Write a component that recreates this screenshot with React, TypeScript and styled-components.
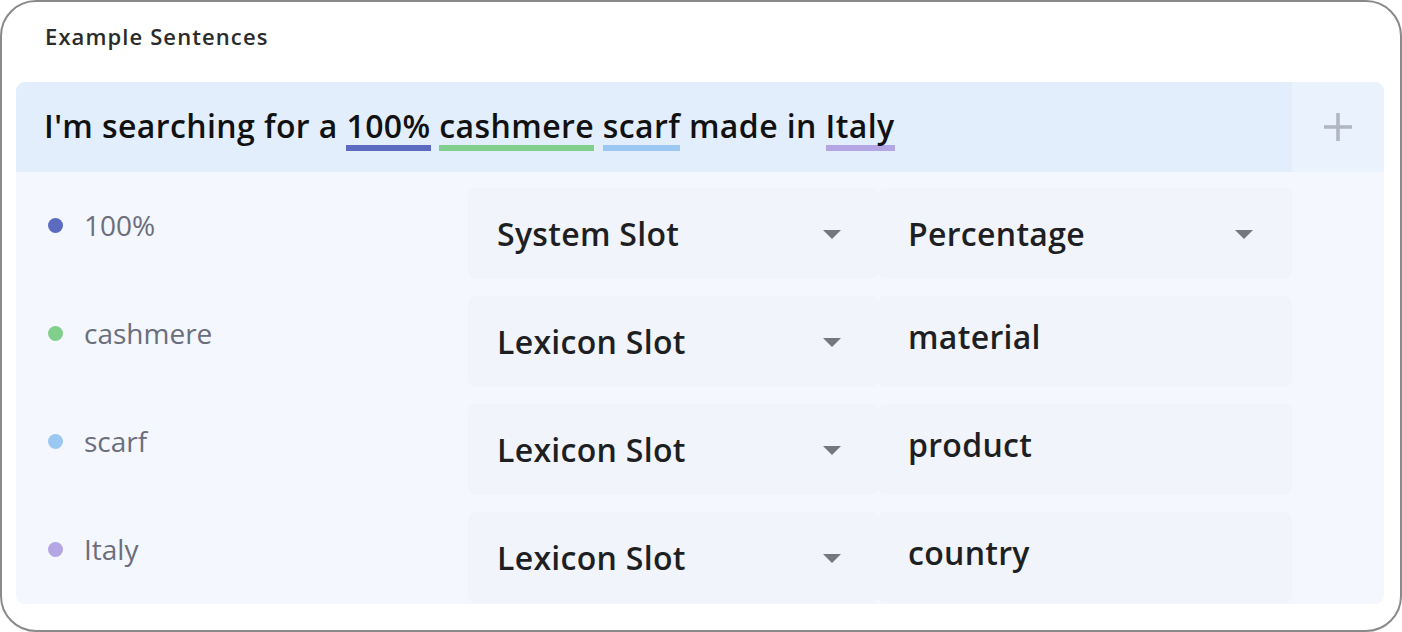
import React from 'react';
import styled, {createGlobalStyle} from "styled-components";

const GlobalStyle = createGlobalStyle`
  body {
    margin: 0;
    font-family: "Open Sans", "Noto Sans", sans-serif;
    background: #ffffff;
  }
`

type Slot = {
    word: string;
    color: string;
    kind: string;
    value: string;
    select?: boolean;
}

const slots: Slot[] = [
    {word: "100%", color: "#5c6bc0", kind: "System Slot", value: "Percentage", select: true},
    {word: "cashmere", color: "#81cf8d", kind: "Lexicon Slot", value: "material"},
    {word: "scarf", color: "#9ac8f3", kind: "Lexicon Slot", value: "product"},
    {word: "Italy", color: "#b3a6e3", kind: "Lexicon Slot", value: "country"},
];

const Arrow = () => (
    <svg width="20" height="10" viewBox="0 0 20 10">
        <path d="M1 1 L19 1 L10 10 Z" fill="#75777d"/>
    </svg>
);

const Plus = () => (
    <svg width="30" height="30" viewBox="0 0 30 30">
        <path d="M15 1 V29 M1 15 H29" stroke="#b0b7c1" strokeWidth="3.6"/>
    </svg>
);

const colorOf = (w: string) => slots.find(s => s.word === w)?.color;

export default function App() {
    const words = "I'm searching for a 100% cashmere scarf made in Italy".split(" ");
    return (
        <>
            <GlobalStyle/>
            <Card>
                <Title>Example Sentences</Title>
                <Panel>
                    <Header>
                        <Sentence>
                            <Line>
                                {words.map((w, i) => (
                                    <React.Fragment key={i}>
                                        {colorOf(w) ? <Mark $color={colorOf(w)!}>{w}</Mark> : w}
                                        {i < words.length - 1 ? " " : ""}
                                    </React.Fragment>
                                ))}
                            </Line>
                        </Sentence>
                        <AddCell><Plus/></AddCell>
                    </Header>
                    <Body>
                        {slots.map(s => (
                            <Row key={s.word}>
                                <Label>
                                    <Dot $color={s.color}/>
                                    {s.word}
                                </Label>
                                <Select>
                                    {s.kind}
                                    <Arrow/>
                                </Select>
                                {s.select ? (
                                    <ValueSelect>
                                        {s.value}
                                        <Arrow/>
                                    </ValueSelect>
                                ) : (
                                    <ValueInput>{s.value}</ValueInput>
                                )}
                            </Row>
                        ))}
                    </Body>
                </Panel>
            </Card>
        </>
    );
}

const Card = styled.div`
  box-sizing: border-box;
  width: 1402px;
  height: 632px;
  border: 2px solid #8a8a8a;
  border-radius: 36px;
  padding: 0 16px 0 14px;
  display: flex;
  flex-direction: column;
`
const Title = styled.div`
  padding: 21px 0 0 29px;
  height: 80px;
  box-sizing: border-box;
  font-size: 22px;
  font-weight: 600;
  letter-spacing: 1.1px;
  color: #2b2b2b;
  line-height: 26px;
`
const Panel = styled.div`
  border-radius: 9px;
  overflow: hidden;
  background: #f4f7fd;
`
const Header = styled.div`
  display: grid;
  grid-template-columns: 1fr 92px;
  height: 90px;
  background: #e2eefb;
`
const Sentence = styled.div`
  padding-left: 28px;
  display: flex;
  align-items: center;
  padding-bottom: 2px;
`
const Line = styled.div`
  white-space: pre;
  font-size: 32px;
  font-weight: 600;
  letter-spacing: 0.4px;
  color: #111111;
  line-height: 40px;
`
const Mark = styled.span<{ $color: string }>`
  display: inline-block;
  line-height: 38px;
  border-bottom: 6px solid ${p => p.$color};
  margin-bottom: -10px;
`
const AddCell = styled.div`
  background: #eaf3fd;
  display: flex;
  align-items: center;
  justify-content: center;
`
const Body = styled.div`
  display: flex;
  flex-direction: column;
  gap: 17px;
  padding: 16px 0 1px;
`
const Row = styled.div`
  display: grid;
  grid-template-columns: 452px 410px 414px 92px;
  height: 91px;
`
const Label = styled.div`
  display: flex;
  align-items: center;
  gap: 21px;
  padding: 22px 0 0 32px;
  height: 30px;
  font-size: 28px;
  color: #6b6e7b;
`
const Dot = styled.span<{ $color: string }>`
  width: 15px;
  height: 15px;
  border-radius: 50%;
  background: ${p => p.$color};
`
const Cell = styled.div`
  background: #f1f4fa;
  border-radius: 8px;
  font-size: 32px;
  font-weight: 600;
  letter-spacing: 0.3px;
  color: #1e1f22;
`
const Select = styled(Cell)`
  display: flex;
  align-items: center;
  justify-content: space-between;
  padding: 0 36px 0 29px;
`
const ValueSelect = styled(Select)`
  padding: 0 38px 0 30px;
`
const ValueInput = styled(Cell)`
  padding: 24px 0 0 30px;
  line-height: 34px;
`
